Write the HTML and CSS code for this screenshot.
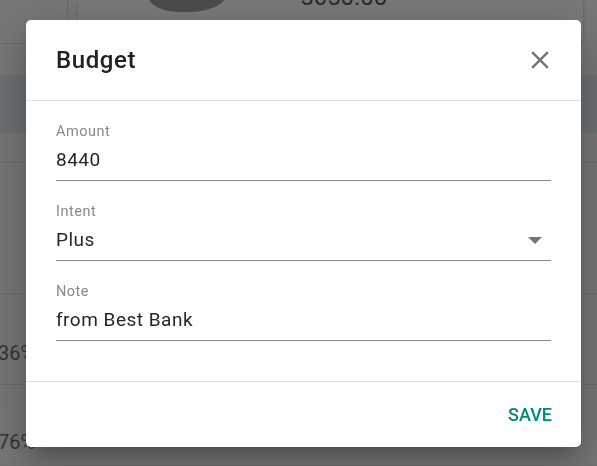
FILE: index.html
```html
<!DOCTYPE html>
<html lang="en">
<head>
    <meta charset="UTF-8">
    <meta name="viewport" content="width=device-width, initial-scale=1.0">
    <title>Budget</title>
    <link rel="stylesheet" href="styles.css">
</head>
<body>

    <!-- Page behind the dialog -->
    <div class="page">
        <div class="summary">
            <div class="summary-side"></div>
            <div class="summary-card">
                <div class="summary-blob"></div>
                <div class="summary-amount">5650.00</div>
            </div>
        </div>

        <div class="table">
            <div class="table-head"></div>
            <div class="table-row row-short"></div>
            <div class="table-row row-tall"></div>
            <div class="table-row row-mid"><span class="pct">36%</span></div>
            <div class="table-row row-last"><span class="pct">76%</span></div>
        </div>
    </div>

    <!-- Dialog -->
    <div class="backdrop">
        <div class="dialog">
            <div class="dialog-header">
                <h2 class="dialog-title">Budget</h2>
                <button class="close-btn" aria-label="Close">
                    <svg viewBox="0 0 24 24" width="30" height="30">
                        <path d="M19 6.41 17.59 5 12 10.59 6.41 5 5 6.41 10.59 12 5 17.59 6.41 19 12 13.41 17.59 19 19 17.59 13.41 12z"/>
                    </svg>
                </button>
            </div>

            <div class="dialog-body">
                <div class="field">
                    <label class="field-label">Amount</label>
                    <div class="field-value">8440</div>
                </div>
                <div class="field">
                    <label class="field-label">Intent</label>
                    <div class="field-value select">
                        <span>Plus</span>
                        <svg class="arrow" viewBox="0 0 14 7" width="14" height="7">
                            <path d="M0 0h14L7 7z"/>
                        </svg>
                    </div>
                </div>
                <div class="field">
                    <label class="field-label">Note</label>
                    <div class="field-value">from Best Bank</div>
                </div>
            </div>

            <div class="dialog-footer">
                <button class="save-btn">Save</button>
            </div>
        </div>
    </div>

</body>
</html>
```

FILE: styles.css
```css
/* Basic Styling */
body {
    margin: 0;
    font-family: Roboto, "Liberation Sans", sans-serif;
    background-color: #eeeeee;
    height: 466px;
    overflow: hidden;
}

/* Page behind the dialog */
.summary {
    display: flex;
    height: 44px;
}

.summary-side {
    width: 67px;
    border-right: 1px solid #d6d6d6;
    border-bottom: 1px solid #d6d6d6;
    background-color: #eeeeee;
}

.summary-card {
    width: 505px;
    margin-left: 10px;
    background-color: #f2f2f2;
    border-radius: 0 0 6px 6px;
    box-shadow: 0 1px 3px rgba(0, 0, 0, 0.25);
    display: flex;
    align-items: flex-start;
    overflow: hidden;
}

.summary-blob {
    width: 80px;
    height: 40px;
    margin-left: 70px;
    margin-top: -28px;
    background-color: #999999;
    border-radius: 0 0 50% 40%;
}

.summary-amount {
    margin-left: 72px;
    margin-top: -17px;
    font-size: 24px;
    color: #555555;
}

.table {
    margin-top: 31px;
}

.table-head {
    height: 58px;
    background-color: #d9e2e9;
}

.table-row {
    border-bottom: 1px solid #dadada;
    display: flex;
    align-items: flex-end;
}

.row-short {
    height: 29px;
}

.row-tall {
    height: 130px;
}

.row-mid {
    height: 71px;
    padding-bottom: 19px;
}

.row-last {
    height: 69px;
    padding-bottom: 11px;
}

.pct {
    font-size: 20px;
    color: #6a6a6a;
    margin-left: -2px;
}

/* Dialog */
.backdrop {
    position: fixed;
    inset: 0;
    background-color: rgba(0, 0, 0, 0.5);
    padding: 20px 16px 19px 26px;
    display: flex;
    align-items: flex-start;
}

.dialog {
    width: 555px;
    height: 427px;
    background-color: white;
    border-radius: 5px;
    box-shadow: 0 11px 15px -7px rgba(0, 0, 0, 0.2),
                0 24px 38px 3px rgba(0, 0, 0, 0.14),
                0 9px 46px 8px rgba(0, 0, 0, 0.12);
    display: flex;
    flex-direction: column;
}

.dialog-header {
    height: 80px;
    border-bottom: 1px solid #e0e0e0;
    display: flex;
    align-items: center;
    justify-content: space-between;
    padding: 0 26px 0 30px;
}

.dialog-title {
    margin: 0;
    font-size: 24px;
    font-weight: 500;
    letter-spacing: 0.6px;
    color: #212121;
}

.close-btn {
    background: none;
    border: none;
    padding: 0;
    width: 30px;
    height: 30px;
    fill: #757575;
    cursor: pointer;
}

.dialog-body {
    padding: 23px 30px 40px 30px;
    display: flex;
    flex-direction: column;
    gap: 23px;
    border-bottom: 1px solid #e0e0e0;
}

.field-label {
    display: block;
    font-size: 14.5px;
    line-height: 16px;
    letter-spacing: 0.5px;
    color: #8a8a8a;
}

.field-value {
    margin-top: 8px;
    padding-bottom: 8px;
    font-size: 19px;
    line-height: 24px;
    letter-spacing: 0.5px;
    color: #262626;
    border-bottom: 1px solid #8c8c8c;
}

.select {
    display: flex;
    align-items: center;
    justify-content: space-between;
    padding-right: 9px;
}

.arrow {
    fill: #757575;
}

.dialog-footer {
    flex: 1;
    display: flex;
    align-items: center;
    justify-content: flex-end;
    padding-right: 29px;
}

.save-btn {
    background: none;
    border: none;
    padding: 0;
    font-family: inherit;
    font-size: 18px;
    font-weight: 500;
    text-transform: uppercase;
    color: #00897b;
    cursor: pointer;
}
```
